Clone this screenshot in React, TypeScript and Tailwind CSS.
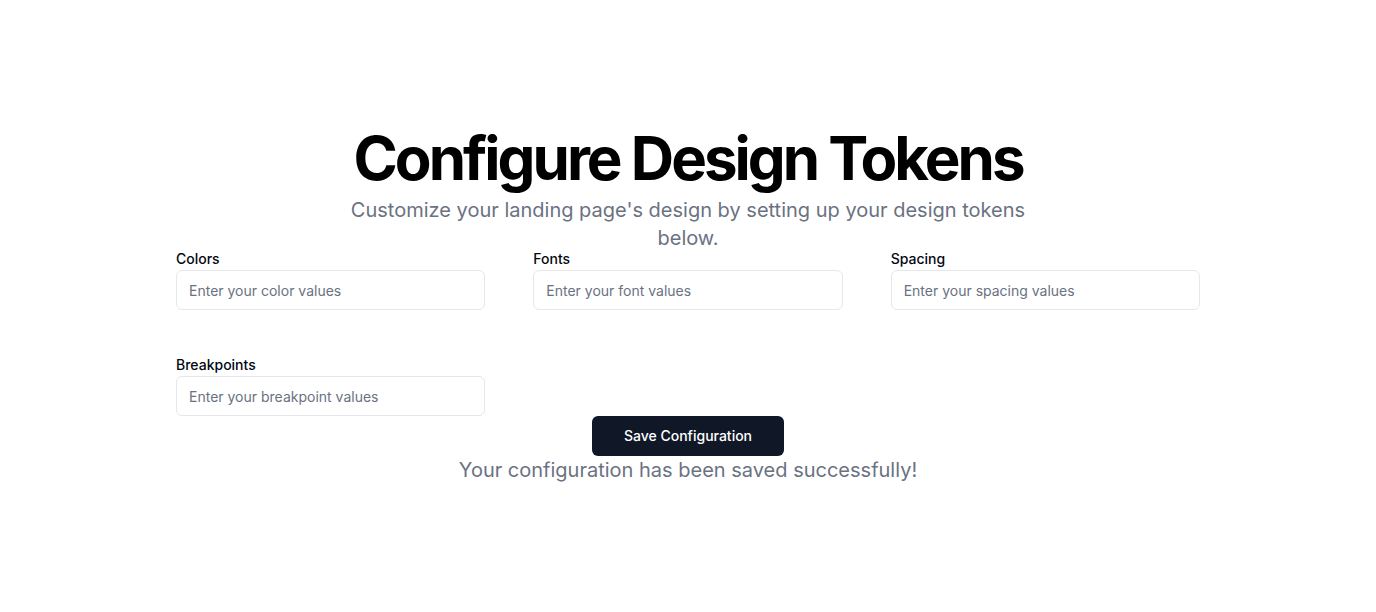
import { useState } from 'react';

const fields = [
  { id: 'colors', label: 'Colors', placeholder: 'Enter your color values' },
  { id: 'fonts', label: 'Fonts', placeholder: 'Enter your font values' },
  { id: 'spacing', label: 'Spacing', placeholder: 'Enter your spacing values' },
  { id: 'breakpoints', label: 'Breakpoints', placeholder: 'Enter your breakpoint values' },
];

export default function App() {
  const [values, setValues] = useState<Record<string, string>>({});

  return (
    <main
      className="min-h-screen flex flex-col items-center justify-center bg-white text-black"
      style={{ fontFamily: 'Inter, "Noto Sans", sans-serif' }}
    >
      {/* Heading */}
      <h1 className="text-6xl leading-none font-bold tracking-tighter text-center">
        Configure Design Tokens
      </h1>
      <p className="mt-2 max-w-[684px] text-xl leading-7 text-gray-500 text-center">
        Customize your landing page's design by setting up your design tokens below.
      </p>

      {/* Token inputs */}
      <div className="w-full max-w-5xl grid grid-cols-3 gap-x-12 gap-y-12">
        {fields.map((field) => (
          <div key={field.id} className="flex flex-col">
            <label htmlFor={field.id} className="text-sm leading-none font-medium text-gray-950 mb-1">
              {field.label}
            </label>
            <input
              id={field.id}
              className="h-10 w-full rounded-md border border-gray-200 bg-white px-3 text-sm text-gray-900 placeholder:text-gray-500 outline-none"
              placeholder={field.placeholder}
              value={values[field.id] ?? ''}
              onChange={(e) => setValues({ ...values, [field.id]: e.target.value })}
            />
          </div>
        ))}
      </div>

      <button className="h-10 w-48 rounded-md bg-gray-900 text-sm font-medium text-white">
        Save Configuration
      </button>
      <p className="text-xl leading-7 text-gray-500">Your configuration has been saved successfully!</p>
    </main>
  );
}
